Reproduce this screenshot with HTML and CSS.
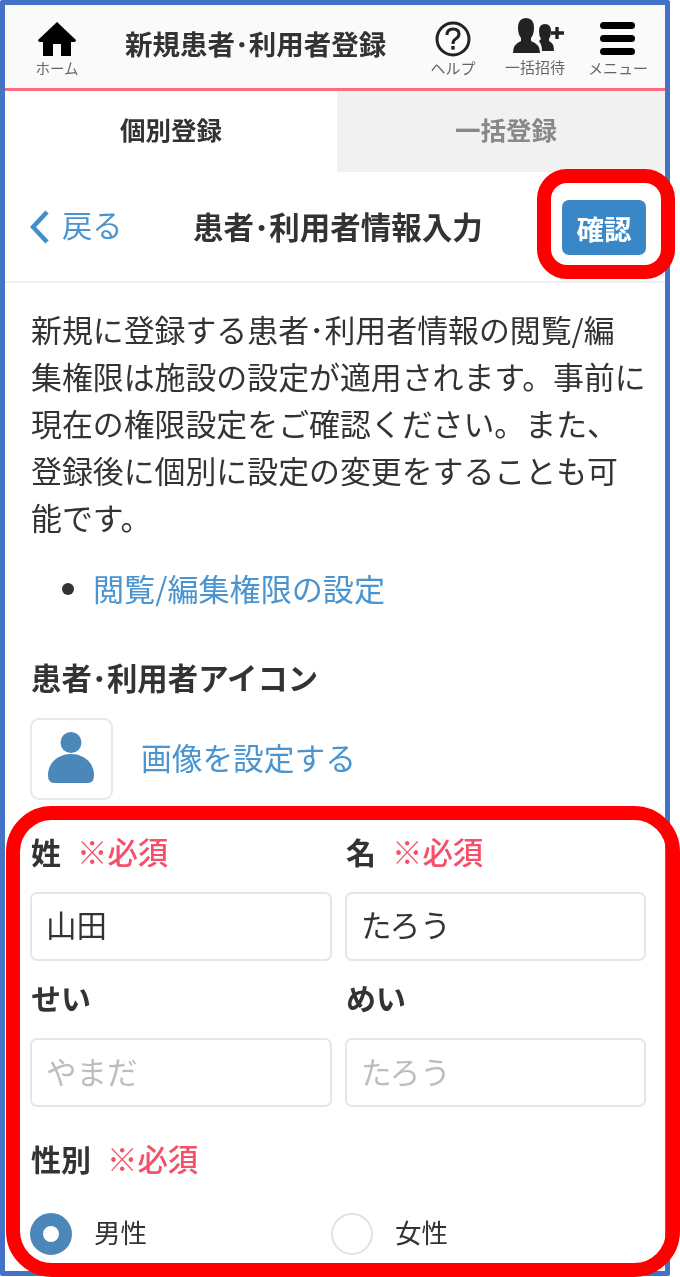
FILE: index.html
```html
<!DOCTYPE html>
<html lang="ja">
<head>
<meta charset="utf-8">
<title>新規患者･利用者登録</title>
<link rel="stylesheet" href="styles.css">
</head>
<body>
<div class="stage">
  <div class="phone">
    <header class="topbar">
      <a class="nav nav-home">
        <svg class="nav-icon" viewBox="0 0 38 34" width="38" height="34"><path d="M19 0 L38 18 Q38 20 36 20 L33 20 L33 34 L23 34 L23 22 L15 22 L15 34 L5 34 L5 20 L2 20 Q0 20 0 18 Z" fill="#000"/></svg>
        <span class="nav-cap">ホーム</span>
      </a>
      <div class="top-title">新規患者･利用者登録</div>
      <a class="nav nav-help">
        <svg class="nav-icon" viewBox="0 0 36 36" width="36" height="36"><circle cx="18" cy="18" r="16" fill="none" stroke="#222" stroke-width="3"/><path d="M12 14 Q12 8 18 8 Q24 8 24 13 Q24 16 20.500 18 Q18 19.500 18 23" fill="none" stroke="#222" stroke-width="3"/><rect x="16.300" y="25" width="3.400" height="3.600" fill="#222"/></svg>
        <span class="nav-cap">ヘルプ</span>
      </a>
      <a class="nav nav-invite">
        <svg class="nav-icon" viewBox="0 0 52 36" width="52" height="36"><path d="M13 0 Q21 0 21 10 Q21 16 18 20 L18 23 Q27 26 27 35 L0 35 Q0 26 8 23 L8 20 Q5 16 5 10 Q5 0 13 0 Z" fill="#222"/><path d="M32 6 Q38 6 38 13 Q38 18 36 21 L36 23 Q41 25 41 33 L29 33 Q29 27 26 23 L28 21 Q26 18 26 13 Q26 6 32 6 Z" fill="#222"/><path d="M44 9 V21 M38 15 H51" stroke="#222" stroke-width="3.400" fill="none"/></svg>
        <span class="nav-cap">一括招待</span>
      </a>
      <a class="nav nav-menu">
        <svg class="nav-icon" viewBox="0 0 36 34" width="36" height="34"><rect x="0" y="0" width="35" height="7" rx="3.500" fill="#000"/><rect x="0" y="13" width="35" height="7" rx="3.500" fill="#000"/><rect x="0" y="26" width="35" height="7" rx="3.500" fill="#000"/></svg>
        <span class="nav-cap">メニュー</span>
      </a>
    </header>

    <nav class="tabs">
      <div class="tab tab-active">個別登録</div>
      <div class="tab tab-idle">一括登録</div>
    </nav>

    <div class="subbar">
      <a class="back">
        <svg viewBox="0 0 20 34" width="20" height="34"><path d="M17 2 L3 17 L17 32" fill="none" stroke="#3f8fcb" stroke-width="4.500"/></svg>
        <span class="back-text">戻る</span>
      </a>
      <h1 class="sub-title">患者･利用者情報入力</h1>
      <button class="confirm">確認</button>
    </div>

    <main class="content">
      <p class="intro">新規に登録する患者･利用者情報の閲覧/編<br>集権限は施設の設定が適用されます。事前に<br>現在の権限設定をご確認ください。また、<br>登録後に個別に設定の変更をすることも可<br>能です。</p>
      <ul class="links">
        <li><a>閲覧/編集権限の設定</a></li>
      </ul>

      <div class="label icon-label">患者･利用者アイコン</div>
      <div class="avatar-row">
        <div class="avatar">
          <svg class="avatar-icon" viewBox="0 0 46 51" width="46" height="51"><circle cx="23" cy="10.500" r="10.500" fill="#4b87b8"/><path d="M0 43 C0 31 10 22 23 22 C36 22 46 31 46 43 Q46 51 40 51 L6 51 Q0 51 0 43 Z" fill="#4b87b8"/></svg>
        </div>
        <a class="avatar-link">画像を設定する</a>
      </div>

      <div class="fields">
        <div class="field">
          <div class="label">姓<span class="req">※必須</span></div>
          <div class="input">山田</div>
        </div>
        <div class="field">
          <div class="label">名<span class="req">※必須</span></div>
          <div class="input">たろう</div>
        </div>
        <div class="field">
          <div class="label">せい</div>
          <div class="input input-ph">やまだ</div>
        </div>
        <div class="field">
          <div class="label">めい</div>
          <div class="input input-ph">たろう</div>
        </div>
      </div>

      <div class="label gender-label">性別<span class="req">※必須</span></div>
      <div class="radios">
        <div class="radio-item"><span class="radio radio-on"></span><span class="radio-text">男性</span></div>
        <div class="radio-item"><span class="radio"></span><span class="radio-text">女性</span></div>
      </div>
    </main>
  </div>
  <div class="mark mark-confirm"></div>
  <div class="mark mark-form"></div>
</div>
</body>
</html>
```

FILE: styles.css
```css
* { box-sizing: border-box; }
html, body { margin: 0; padding: 0; background: #fff; }
body {
  font-family: "Noto Sans CJK JP", "Noto Sans", sans-serif;
  color: #333;
}
.stage { position: relative; width: 680px; height: 1277px; overflow: hidden; }
.phone {
  width: 670px;
  height: 1276px;
  border: 5px solid #4472c4;
  border-radius: 2px;
  overflow: hidden;
  display: flex;
  flex-direction: column;
  background: #fff;
}
.topbar {
  height: 86px;
  flex: none;
  display: flex;
  align-items: flex-start;
  background: #fafafa;
  border-bottom: 3px solid #fb6d7c;
  padding-right: 12px;
  filter: blur(0.6px);
}
.nav {
  display: flex;
  flex-direction: column;
  align-items: center;
  padding-top: 17px;
  flex: none;
}
.nav-icon { display: block; }
.nav-cap { font-size: 15px; line-height: 16px; color: #666; margin-top: 3px; white-space: nowrap; }
.nav-home { width: 68px; margin-left: 18px; }
.nav-home .nav-cap { font-size: 14.500px; margin-top: 4px; }
.nav-help { width: 60px; }
.nav-help .nav-icon { margin-top: -1px; }
.nav-invite { width: 80px; margin-left: 12px; padding-top: 13px; }
.nav-invite .nav-icon { margin-left: 8px; }
.nav-invite .nav-cap { margin-top: 5px; }
.nav-menu { width: 70px; margin-left: 8px; }
.nav-menu .nav-cap { margin-top: 4px; }
.top-title {
  flex: 1;
  margin-left: 34px;
  font-size: 27.500px;
  line-height: 40px;
  font-weight: 700;
  color: #333;
  padding-top: 18px;
  white-space: nowrap;
}
.tabs { display: flex; height: 81px; flex: none; filter: blur(0.6px); }
.tab {
  display: flex;
  align-items: center;
  justify-content: center;
  font-size: 25.500px;
  font-weight: 700;
  padding-bottom: 6px;
}
.tab-active { width: 332px; background: #fff; color: #333; }
.tab-idle { flex: 1; background: #f1f1f1; color: #888; padding-left: 10px; }
.subbar {
  height: 111px;
  flex: none;
  display: flex;
  align-items: center;
  border-bottom: 2px solid #f2f2f2;
  padding: 0 19px 0 25px;
  filter: blur(0.6px);
}
.back { display: flex; align-items: center; gap: 12px; width: 163px; color: #4a94d0; font-size: 30.300px; flex: none; }
.back-text { position: relative; top: -3px; }
.sub-title { margin: 0 0 2px; flex: 1; font-size: 30.500px; font-weight: 700; color: #333; white-space: nowrap; }
.confirm {
  width: 84px;
  height: 55px;
  border: 0;
  border-radius: 7px;
  background: #3a87c8;
  color: #fff;
  font: 700 27.500px "Noto Sans CJK JP", sans-serif;
  padding: 0;
  margin-top: 2px;
}
.content { padding: 22px 19px 0 25px; filter: blur(0.6px); }
.intro { margin: 0; padding-left: 1px; font-size: 30.900px; line-height: 47px; color: #333; white-space: nowrap; }
.links { margin: 24px 0 0; padding: 0 0 0 63px; font-size: 31.100px; line-height: 47px; }
.links a { color: #4a94d0; }
.links li::marker { color: #333; }
.label { font-size: 30px; line-height: 40px; font-weight: 700; color: #333; white-space: nowrap; }
.icon-label { margin-top: 46px; font-size: 30.400px; padding-left: 1px; }
.req { color: #f5506a; font-size: 30.400px; font-weight: 500; margin-left: 16px; }
.avatar-row { display: flex; align-items: center; margin-top: 21px; }
.avatar {
  width: 83px;
  height: 82px;
  border: 2px solid #e8e8e8;
  border-radius: 9px;
  display: flex;
  align-items: center;
  justify-content: center;
  padding: 0 2px 3px 0;
}
.avatar-link { margin: 0 0 5px 28px; font-size: 30.700px; color: #4a94d0; }
.fields {
  display: grid;
  grid-template-columns: 302px 301px;
  column-gap: 13px;
  row-gap: 16px;
  margin-top: 31px;
}
.field { display: flex; flex-direction: column; gap: 21px; }
.field .label { padding-left: 1px; }
.input {
  height: 69px;
  border: 2px solid #e6e6e6;
  border-radius: 7px;
  padding-left: 14px;
  font-size: 30.500px;
  line-height: 61px;
  color: #333;
}
.input-ph { color: #bdbdbd; line-height: 63px; }
.gender-label { margin-top: 31px; padding-left: 1px; }
.radios { display: flex; margin-top: 34px; }
.radio-item { display: flex; align-items: center; gap: 22px; width: 301px; font-size: 26.500px; color: #333; }
.radio-text { margin-bottom: 4px; }
.radio {
  width: 42px;
  height: 42px;
  border-radius: 50%;
  border: 2px solid #e2e2e2;
  background: #fff;
  flex: none;
}
.radio-on { border: 13px solid #4b87b8; }
.mark { position: absolute; border: 14px solid #ff0000; background: transparent; }
.mark-confirm { left: 537px; top: 169px; width: 138px; height: 110px; border-radius: 30px; }
.mark-form { left: 6px; top: 806px; width: 674px; height: 471px; border-radius: 46px; }
```
